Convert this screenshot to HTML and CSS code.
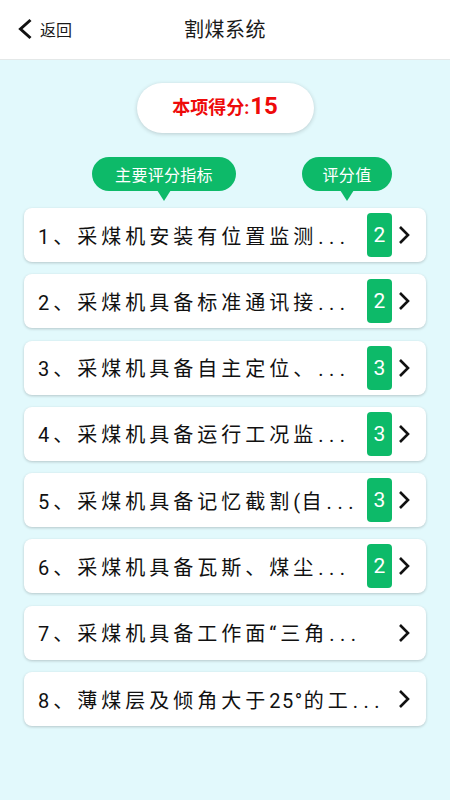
FILE: index.html
```html
<!DOCTYPE html>
<html lang="zh-CN">
<head>
<meta charset="utf-8">
<title>割煤系统</title>
<link rel="stylesheet" href="styles.css">
</head>
<body>
<header class="topbar">
  <div class="back">
    <svg class="back-icon" width="16" height="22" viewBox="0 0 16 22"><path d="M13.5 2 L3.5 11 L13.5 20" fill="none" stroke="#111" stroke-width="3"/></svg>
    <span class="back-text">返回</span>
  </div>
  <div class="title">割煤系统</div>
  <div class="spacer"></div>
</header>

<main class="content">
  <div class="score-pill">
    <span class="score-label">本项得分:</span><span class="score-num">15</span>
  </div>

  <div class="tags">
    <div class="tag tag-main">主要评分指标</div>
    <div class="tag tag-value">评分值</div>
  </div>

  <ul class="list">
    <li class="card"><span class="card-text">1、采煤机安装有位置监测<span class="dots">...</span></span><span class="badge">2</span><svg class="chev" width="12" height="20" viewBox="0 0 12 20"><path d="M2 2 L10 10 L2 18" fill="none" stroke="#111" stroke-width="2.6"/></svg></li>
    <li class="card"><span class="card-text">2、采煤机具备标准通讯接<span class="dots">...</span></span><span class="badge">2</span><svg class="chev" width="12" height="20" viewBox="0 0 12 20"><path d="M2 2 L10 10 L2 18" fill="none" stroke="#111" stroke-width="2.6"/></svg></li>
    <li class="card"><span class="card-text">3、采煤机具备自主定位、<span class="dots">...</span></span><span class="badge">3</span><svg class="chev" width="12" height="20" viewBox="0 0 12 20"><path d="M2 2 L10 10 L2 18" fill="none" stroke="#111" stroke-width="2.6"/></svg></li>
    <li class="card"><span class="card-text">4、采煤机具备运行工况监<span class="dots">...</span></span><span class="badge">3</span><svg class="chev" width="12" height="20" viewBox="0 0 12 20"><path d="M2 2 L10 10 L2 18" fill="none" stroke="#111" stroke-width="2.6"/></svg></li>
    <li class="card"><span class="card-text">5、采煤机具备记忆截割<span class="num">(</span>自<span class="dots">...</span></span><span class="badge">3</span><svg class="chev" width="12" height="20" viewBox="0 0 12 20"><path d="M2 2 L10 10 L2 18" fill="none" stroke="#111" stroke-width="2.6"/></svg></li>
    <li class="card"><span class="card-text">6、采煤机具备瓦斯、煤尘<span class="dots">...</span></span><span class="badge">2</span><svg class="chev" width="12" height="20" viewBox="0 0 12 20"><path d="M2 2 L10 10 L2 18" fill="none" stroke="#111" stroke-width="2.6"/></svg></li>
    <li class="card"><span class="card-text">7、采煤机具备工作面“三角<span class="dots">...</span></span><svg class="chev" width="12" height="20" viewBox="0 0 12 20"><path d="M2 2 L10 10 L2 18" fill="none" stroke="#111" stroke-width="2.6"/></svg></li>
    <li class="card"><span class="card-text">8、薄煤层及倾角大于<span class="num">25°</span>的工<span class="dots">...</span></span><svg class="chev" width="12" height="20" viewBox="0 0 12 20"><path d="M2 2 L10 10 L2 18" fill="none" stroke="#111" stroke-width="2.6"/></svg></li>
  </ul>
</main>
</body>
</html>
```

FILE: styles.css
```css
* { box-sizing: border-box; }

html, body {
  margin: 0;
  padding: 0;
}

body {
  width: 450px;
  min-height: 800px;
  background: #e2f9fc;
  font-family: Roboto, "Noto Sans CJK SC", sans-serif;
  color: #111;
}

.topbar {
  height: 60px;
  background: #fff;
  border-bottom: 1px solid #e4e8e8;
  display: grid;
  grid-template-columns: 1fr auto 1fr;
  align-items: center;
}

.back {
  display: flex;
  align-items: center;
  padding-left: 17px;
  padding-bottom: 2px;
}

.back-icon {
  display: block;
}

.back-text {
  margin-left: 7px;
  font-size: 16px;
  color: #1a1a1a;
}

.title {
  font-size: 20px;
  color: #1a1a1a;
  padding-bottom: 3px;
  letter-spacing: 0.5px;
}

.content {
  display: flex;
  flex-direction: column;
}

.score-pill {
  align-self: center;
  margin-top: 23px;
  width: 177px;
  height: 50px;
  border-radius: 25px;
  background: #fff;
  box-shadow: 0 1px 4px rgba(0, 0, 0, 0.18);
  display: flex;
  align-items: baseline;
  justify-content: center;
  padding-top: 9px;
  color: #ee0a0a;
  font-weight: 700;
}

.score-label {
  font-size: 18px;
}

.score-num {
  font-size: 24px;
  margin-left: 1px;
}

.tags {
  display: flex;
  margin-top: 24px;
  height: 34px;
  padding: 0 58px 0 92px;
  justify-content: space-between;
}

.tag {
  position: relative;
  height: 34px;
  border-radius: 17px;
  background: #0dba69;
  color: #fff;
  font-size: 16px;
  letter-spacing: 0.3px;
  display: flex;
  align-items: center;
  justify-content: center;
}

.tag::after {
  content: "";
  position: absolute;
  left: 50%;
  top: 33px;
  margin-left: -7px;
  border-left: 7px solid transparent;
  border-right: 7px solid transparent;
  border-top: 11px solid #0dba69;
}

.tag-main {
  width: 144px;
}

.tag-value {
  width: 90px;
}

.list {
  list-style: none;
  margin: 17px 0 0;
  padding: 0 24px;
  display: flex;
  flex-direction: column;
  gap: 12.3px;
}

.card {
  height: 54px;
  background: #fff;
  border-radius: 8px;
  box-shadow: 0 1px 3px rgba(0, 0, 0, 0.2);
  display: flex;
  align-items: center;
  padding: 0 16px 0 14px;
}

.card-text {
  flex: 1;
  min-width: 0;
  white-space: nowrap;
  overflow: hidden;
  font-size: 20px;
  letter-spacing: 4px;
  color: #111;
}

.card-text .num {
  letter-spacing: 1.5px;
}

.card-text .dots {
  letter-spacing: 5.5px;
  margin-left: 1px;
}

.badge {
  width: 25px;
  height: 44px;
  border-radius: 4px;
  background: #0dba69;
  color: #fff;
  font-size: 21px;
  display: flex;
  align-items: center;
  justify-content: center;
  margin-right: 6px;
}

.chev {
  display: block;
  flex: none;
}
```
